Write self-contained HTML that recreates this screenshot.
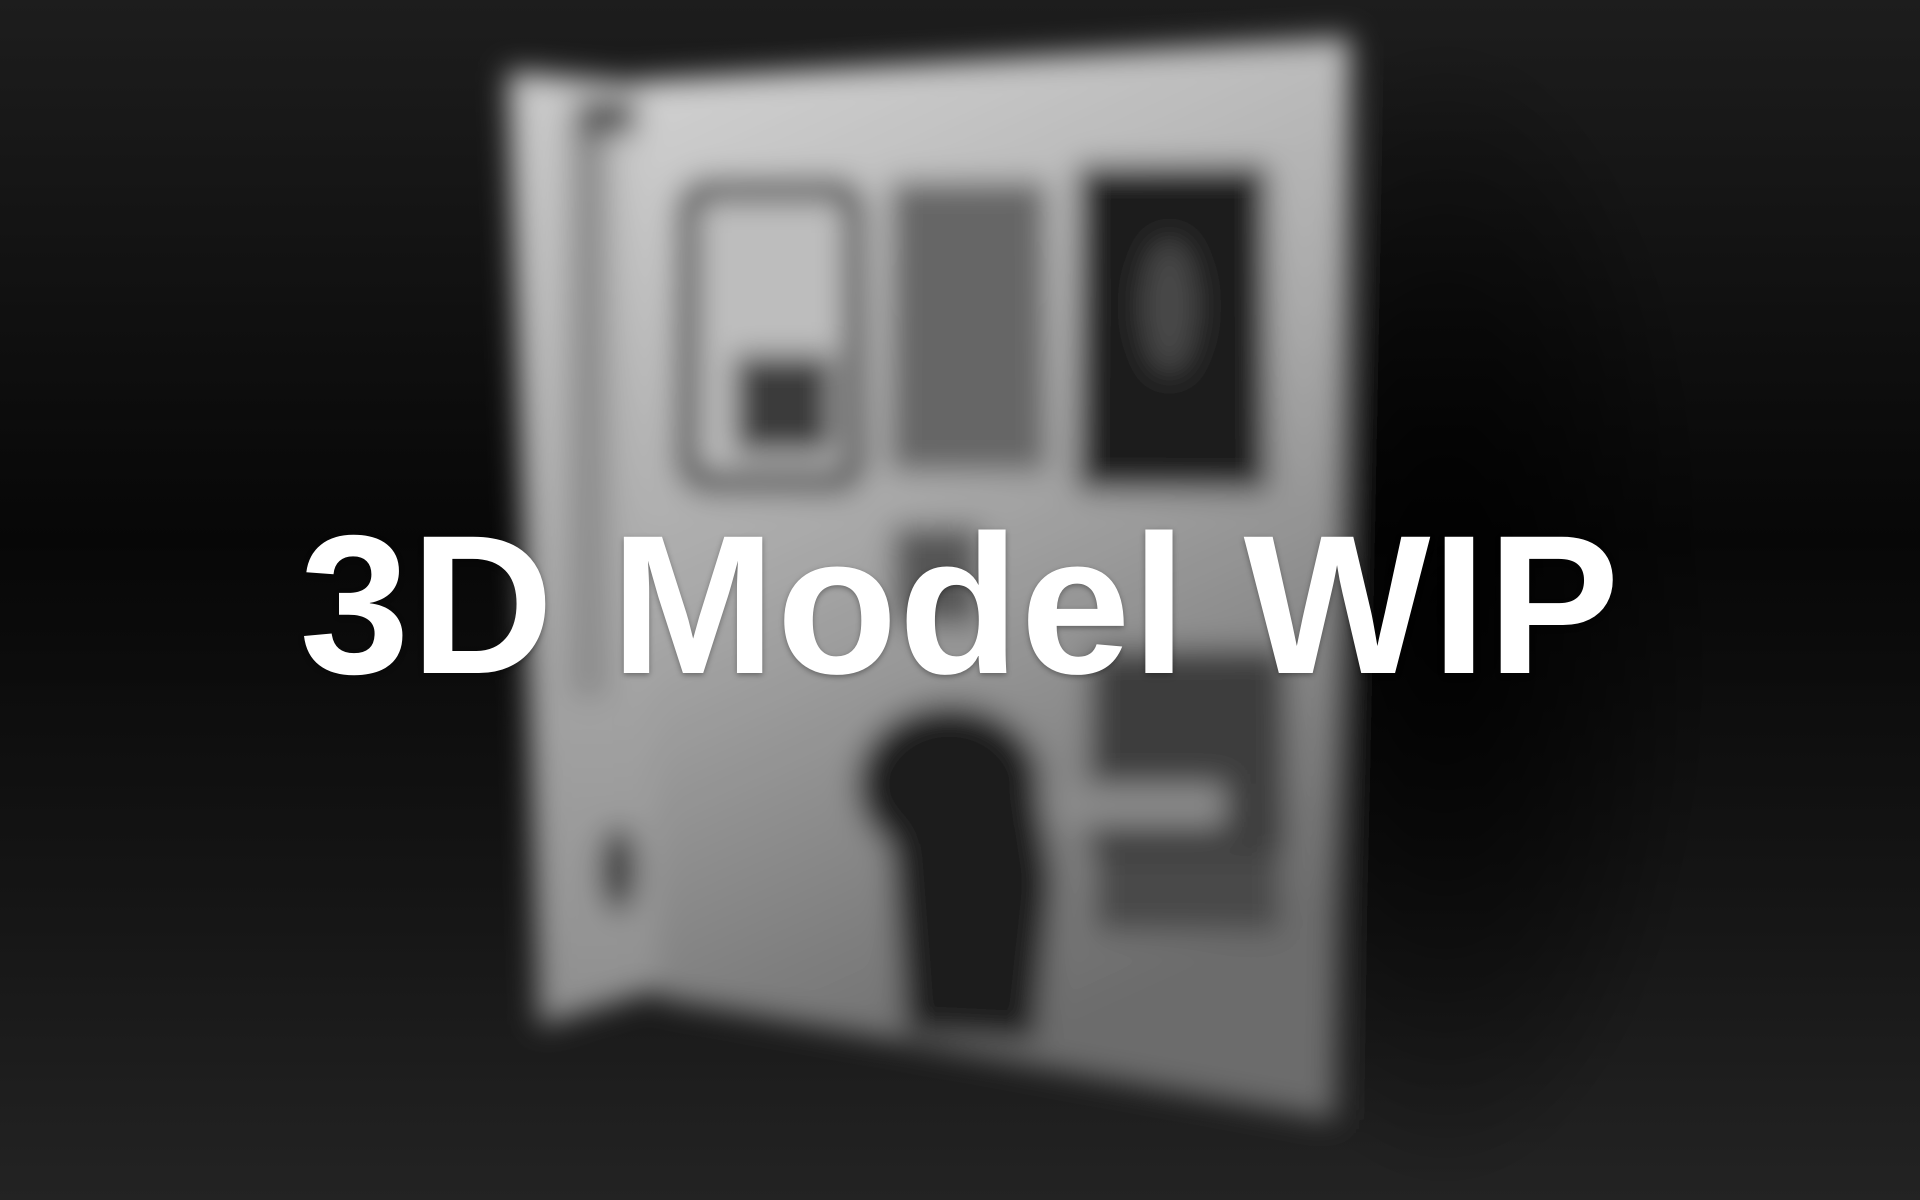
<!DOCTYPE html>
<html><head><meta charset="utf-8"><style>
html,body{margin:0;padding:0;width:1920px;height:1200px;overflow:hidden;background:#111}
svg{position:absolute;left:0;top:0}
.t{position:absolute;left:0;top:0;width:1920px;height:1200px;display:flex;align-items:center;justify-content:center;}
.t h1{margin:0;margin-top:9px;font-family:"Liberation Sans",sans-serif;font-weight:700;font-size:198px;color:#fff;letter-spacing:1px;text-shadow:0 2px 6px rgba(0,0,0,.35);white-space:nowrap}
</style></head><body>
<svg width="1920" height="1200" viewBox="0 0 1568 980" preserveAspectRatio="none">
<defs>
<linearGradient id="bg" x1="0" y1="0" x2="0" y2="1">
<stop offset="0" stop-color="#1d1d1d"/><stop offset=".45" stop-color="#070707"/><stop offset=".75" stop-color="#151515"/><stop offset="1" stop-color="#232323"/></linearGradient>
<linearGradient id="mp" x1="0" y1="0" x2="0.3" y2="1">
<stop offset="0" stop-color="#d4d4d4"/><stop offset=".5" stop-color="#a8a8a8"/><stop offset="1" stop-color="#6c6c6c"/></linearGradient>
<linearGradient id="lw" x1="0" y1="0" x2="0" y2="1">
<stop offset="0" stop-color="#cacaca"/><stop offset="1" stop-color="#8e8e8e"/></linearGradient>
<radialGradient id="sh" cx=".5" cy=".5" r=".5"><stop offset="0" stop-color="#000" stop-opacity=".9"/><stop offset="1" stop-color="#000" stop-opacity="0"/></radialGradient>
<filter id="b" x="-20%" y="-20%" width="140%" height="140%"><feGaussianBlur stdDeviation="12"/></filter>
</defs>
<rect width="1568" height="980" fill="url(#bg)"/>
<g filter="url(#b)">
<ellipse cx="1180" cy="500" rx="220" ry="470" fill="url(#sh)"/>
<polygon points="415,58 545,70 548,805 440,838" fill="url(#lw)"/>
<rect x="465" y="100" width="32" height="470" fill="#8c8c8c"/>
<rect x="470" y="80" width="50" height="30" fill="#555"/>
<ellipse cx="505" cy="710" rx="14" ry="35" fill="#333"/>
<polygon points="520,66 1103,30 1090,915 538,815" fill="url(#mp)"/>
<rect x="562" y="155" width="136" height="238" rx="16" fill="#bdbdbd" stroke="#222" stroke-width="16"/>
<rect x="600" y="290" width="80" height="80" fill="#3a3a3a"/>
<rect x="727" y="148" width="128" height="237" fill="#666"/>
<rect x="880" y="135" width="155" height="265" fill="#1a1a1a"/>
<ellipse cx="955" cy="250" rx="22" ry="55" fill="#4a4a4a"/>
<rect x="730" y="430" width="70" height="80" fill="#555"/>
<rect x="890" y="530" width="160" height="170" rx="10" fill="#3e3e3e"/>
<rect x="820" y="640" width="180" height="35" fill="#8a8a8a"/>
<ellipse cx="775" cy="640" rx="75" ry="65" fill="#1e1e1e"/>
<path d="M720,650 L850,650 L860,720 L845,850 L740,845 L728,700 Z" fill="#1e1e1e"/>
<rect x="895" y="700" width="150" height="60" fill="#4a4a4a"/>
</g>
</svg>
<div class="t"><h1>3D Model WIP</h1></div>
</body></html>
